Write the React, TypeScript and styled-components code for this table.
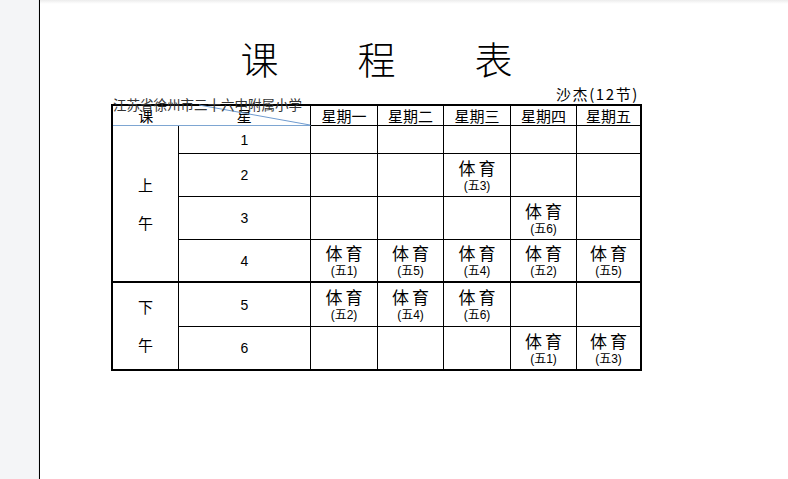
import React from "react";
import styled, { createGlobalStyle } from "styled-components";

const Global = createGlobalStyle`
  html, body { margin: 0; padding: 0; background: #fff; }
  body { font-family: "Noto Sans CJK SC", "Liberation Sans", sans-serif; color: #000; }
  * { box-sizing: border-box; }
`;

const Page = styled.div`
  display: flex;
  height: 100vh;
  overflow: hidden;
`;

const Sidebar = styled.div`
  width: 39px;
  flex: none;
  background: #f4f5f7;
  border-right: 1px solid #e9ebee;
`;

const Main = styled.div`
  flex: 1;
  border-left: 1px solid #000;
  background: linear-gradient(#ececec 0px, #f6f6f6 2px, #fff 4px);
  padding: 38px 0 0 71px;
`;

const Sheet = styled.div`
  width: 531px;
  display: flex;
  flex-direction: column;
`;

const Title = styled.div`
  display: flex;
  justify-content: center;
  gap: 79px;
  height: 40px;
  font-family: "Noto Sans CJK SC", serif;
  font-size: 38px;
  font-weight: 300;
  line-height: 40px;
`;

const CaptionRow = styled.div`
  position: relative;
  height: 26px;
  display: flex;
  justify-content: flex-end;
  align-items: flex-end;
  padding: 0 3px 2px 0;
`;

const Teacher = styled.span`
  font-size: 15px;
  line-height: 16px;
  letter-spacing: 1.6px;
`;

const School = styled.span`
  position: absolute;
  left: 2px;
  bottom: -8px;
  font-size: 13.5px;
  line-height: 16px;
  color: #333;
  z-index: 2;
  white-space: nowrap;
`;

const Grid = styled.div`
  display: grid;
  grid-template-columns: 66px 132px 67px 66px 67px 66px 63px;
  grid-template-rows: 20px 28px 43px 43px 43px 44px 42px;
  border: 2px solid #000;
`;

const Cell = styled.div<{ $right?: boolean; $bottom?: number; $col?: string; $row?: string; $bColor?: string }>`
  display: flex;
  flex-direction: column;
  align-items: center;
  justify-content: center;
  border-right: ${(p) => (p.$right === false ? "none" : "1px solid #000")};
  border-bottom: ${(p) => (p.$bottom === 0 ? "none" : `${p.$bottom ?? 1}px solid ${p.$bColor ?? "#000"}`)};
  ${(p) => (p.$col ? `grid-column: ${p.$col};` : "")}
  ${(p) => (p.$row ? `grid-row: ${p.$row};` : "")}
`;

const DayHead = styled.span`
  font-size: 15px;
  line-height: 18px;
`;

const CornerCell = styled(Cell)`
  position: relative;
  flex-direction: row;
  justify-content: flex-start;
  align-items: flex-end;
`;

const CornerLabel = styled.span<{ $w: number }>`
  width: ${(p) => p.$w}px;
  text-align: center;
  font-size: 15px;
  line-height: 18px;
`;

const Diagonal = styled.svg`
  position: absolute;
  left: 0;
  top: 0;
  overflow: visible;
  pointer-events: none;
`;

const Period = styled.span`
  font-size: 15px;
  line-height: 38px;
`;

const Num = styled.span`
  font-family: "Liberation Sans", Arial, sans-serif;
  font-size: 14px;
`;

const Course = styled.span`
  font-size: 17px;
  line-height: 22px;
  letter-spacing: 3px;
  padding-left: 3px;
`;

const Room = styled.span`
  font-size: 12px;
  line-height: 15px;
  font-family: "Liberation Sans", "Noto Sans CJK SC", sans-serif;
`;

const days = ["星期一", "星期二", "星期三", "星期四", "星期五"];

const schedule: Record<number, (string | null)[]> = {
  1: [null, null, null, null, null],
  2: [null, null, "五3", null, null],
  3: [null, null, null, "五6", null],
  4: ["五1", "五5", "五4", "五2", "五5"],
  5: ["五2", "五4", "五6", null, null],
  6: [null, null, null, "五1", "五3"],
};

export default function App() {
  return (
    <>
      <Global />
      <Page>
        <Sidebar />
        <Main>
          <Sheet>
            <Title>
              <span>课</span>
              <span>程</span>
              <span>表</span>
            </Title>
            <CaptionRow>
              <School>江苏省徐州市二十六中附属小学</School>
              <Teacher>沙杰(12节)</Teacher>
            </CaptionRow>
            <Grid>
              <CornerCell $col="1 / span 2" $bColor="#7ea6d2">
                <CornerLabel $w={66}>课</CornerLabel>
                <CornerLabel $w={132}>星</CornerLabel>
                <Diagonal width="197" height="19">
                  <line x1="86" y1="-1" x2="197" y2="19" stroke="#6f9bcf" strokeWidth="1" />
                </Diagonal>
              </CornerCell>
              {days.map((d, i) => (
                <Cell key={d} $right={i < 4}>
                  <DayHead>{d}</DayHead>
                </Cell>
              ))}
              <Cell $col="1" $row="2 / span 4" $bottom={2}>
                <Period>上</Period>
                <Period>午</Period>
              </Cell>
              <Cell $col="1" $row="6 / span 2" $bottom={0}>
                <Period>下</Period>
                <Period>午</Period>
              </Cell>
              {[1, 2, 3, 4, 5, 6].map((n) => (
                <React.Fragment key={n}>
                  <Cell $col="2" $row={`${n + 1}`} $bottom={n === 4 ? 2 : n === 6 ? 0 : 1}>
                    <Num>{n}</Num>
                  </Cell>
                  {schedule[n].map((room, i) => (
                    <Cell
                      key={i}
                      $col={`${i + 3}`}
                      $row={`${n + 1}`}
                      $right={i < 4}
                      $bottom={n === 4 ? 2 : n === 6 ? 0 : 1}
                    >
                      {room && (
                        <>
                          <Course>体育</Course>
                          <Room>({room})</Room>
                        </>
                      )}
                    </Cell>
                  ))}
                </React.Fragment>
              ))}
            </Grid>
          </Sheet>
        </Main>
      </Page>
    </>
  );
}
